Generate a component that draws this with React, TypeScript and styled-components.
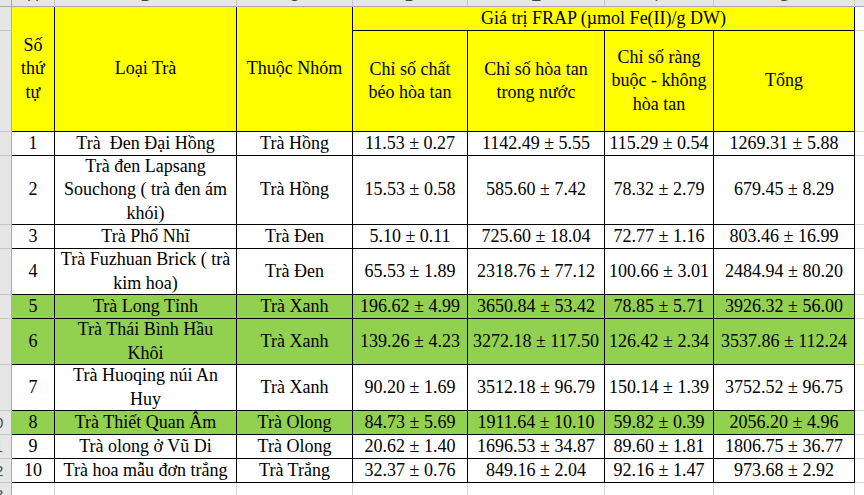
import React from "react";
import styled, { createGlobalStyle } from "styled-components";

const GlobalStyle = createGlobalStyle`
  html, body {
    margin: 0;
    padding: 0;
    background: #ffffff;
    overflow: hidden;
  }
  body {
    width: 864px;
    height: 495px;
  }
`;

const Sheet = styled.div`
  display: grid;
  grid-template-columns: 12px 43px 182px 116px 115px 137px 109px 141px 30px;
  grid-template-rows: 7px 24px 101px 24px 69px 24px 46px 24px 46px 46px 24px 24px 24px 24px;
  width: 864px;
  height: 495px;
  overflow: hidden;
  background: #ffffff;
`;

const Corner = styled.div`
  box-sizing: border-box;
  background: #e6e6e6;
  border-right: 1px solid #ababab;
  border-bottom: 1px solid #ababab;
`;

const ColHead = styled.div`
  box-sizing: border-box;
  background: #e6e6e6;
  border-right: 1px solid #c6c6c6;
  border-bottom: 1px solid #ababab;
  display: flex;
  justify-content: center;
  align-items: flex-end;
  overflow: hidden;
`;

const ColLetter = styled.span`
  font-family: "Liberation Sans", Arial, sans-serif;
  font-size: 15px;
  line-height: 14px;
  color: #444444;
  margin-bottom: 3px;
`;

const RowHead = styled.div`
  box-sizing: border-box;
  background: #e6e6e6;
  border-right: 1px solid #ababab;
  border-bottom: 1px solid #c6c6c6;
  display: flex;
  align-items: center;
  overflow: hidden;
`;

const RowNum = styled.span`
  flex: none;
  width: 18px;
  margin-left: -14px;
  text-align: center;
  font-family: "Liberation Sans", Arial, sans-serif;
  font-size: 15px;
  line-height: 18px;
  color: #444444;
`;

type Fill = "yellow" | "green" | "white";

const fillColor: Record<Fill, string> = {
  yellow: "#ffff00",
  green: "#92d050",
  white: "#ffffff",
};

const Cell = styled.div<{ $fill?: Fill; $rows?: number; $cols?: number; $nowrap?: boolean }>`
  box-sizing: border-box;
  grid-row: span ${(p) => p.$rows ?? 1};
  grid-column: span ${(p) => p.$cols ?? 1};
  background: ${(p) => fillColor[p.$fill ?? "white"]};
  border-right: 1px solid #000000;
  border-bottom: 1px solid #000000;
  display: flex;
  align-items: center;
  justify-content: center;
  text-align: center;
  padding: 0 3px;
  font-family: "Liberation Serif", "Times New Roman", serif;
  font-size: 18px;
  line-height: 23.5px;
  color: #000000;
  white-space: ${(p) => (p.$nowrap ? "pre" : "pre-wrap")};
  overflow: visible;
`;

const Blank = styled.div`
  box-sizing: border-box;
  background: #ffffff;
  border-right: 1px solid #d4d4d4;
  border-bottom: 1px solid #d4d4d4;
`;

type Row = {
  no: string;
  name: string;
  group: string;
  values: string[];
  green?: boolean;
};

const rows: Row[] = [
  {
    no: "1",
    name: "Trà  Đen Đại Hồng",
    group: "Trà Hồng",
    values: ["11.53 ± 0.27", "1142.49 ± 5.55", "115.29 ± 0.54", "1269.31 ± 5.88"],
  },
  {
    no: "2",
    name: "Trà đen Lapsang\nSouchong ( trà đen ám\nkhói)",
    group: "Trà Hồng",
    values: ["15.53 ± 0.58", "585.60 ± 7.42", "78.32 ± 2.79", "679.45 ± 8.29"],
  },
  {
    no: "3",
    name: "Trà Phổ Nhĩ",
    group: "Trà Đen",
    values: ["5.10 ± 0.11", "725.60 ± 18.04", "72.77 ± 1.16", "803.46 ± 16.99"],
  },
  {
    no: "4",
    name: "Trà Fuzhuan Brick ( trà\nkim hoa)",
    group: "Trà Đen",
    values: ["65.53 ± 1.89", "2318.76 ± 77.12", "100.66 ± 3.01", "2484.94 ± 80.20"],
  },
  {
    no: "5",
    name: "Trà Long Tỉnh",
    group: "Trà Xanh",
    values: ["196.62 ± 4.99", "3650.84 ± 53.42", "78.85 ± 5.71", "3926.32 ± 56.00"],
    green: true,
  },
  {
    no: "6",
    name: "Trà Thái Bình Hầu\nKhôi",
    group: "Trà Xanh",
    values: ["139.26 ± 4.23", "3272.18 ± 117.50", "126.42 ± 2.34", "3537.86 ± 112.24"],
    green: true,
  },
  {
    no: "7",
    name: "Trà Huoqing núi An\nHuy",
    group: "Trà Xanh",
    values: ["90.20 ± 1.69", "3512.18 ± 96.79", "150.14 ± 1.39", "3752.52 ± 96.75"],
  },
  {
    no: "8",
    name: "Trà Thiết Quan Âm",
    group: "Trà Olong",
    values: ["84.73 ± 5.69", "1911.64 ± 10.10", "59.82 ± 0.39", "2056.20 ± 4.96"],
    green: true,
  },
  {
    no: "9",
    name: "Trà olong ở Vũ Di",
    group: "Trà Olong",
    values: ["20.62 ± 1.40", "1696.53 ± 34.87", "89.60 ± 1.81", "1806.75 ± 36.77"],
  },
  {
    no: "10",
    name: "Trà hoa mẫu đơn trắng",
    group: "Trà Trắng",
    values: ["32.37 ± 0.76", "849.16 ± 2.04", "92.16 ± 1.47", "973.68 ± 2.92"],
  },
];

const letters = ["A", "B", "C", "D", "E", "F", "G", "H"];

export default function App() {
  return (
    <>
      <GlobalStyle />
      <Sheet>
        <Corner />
        {letters.map((l) => (
          <ColHead key={l}>
            <ColLetter>{l}</ColLetter>
          </ColHead>
        ))}

        <RowHead>
          <RowNum>1</RowNum>
        </RowHead>
        <Cell $fill="yellow" $rows={2}>{"Số\nthứ\ntự"}</Cell>
        <Cell $fill="yellow" $rows={2}>Loại Trà</Cell>
        <Cell $fill="yellow" $rows={2}>Thuộc Nhóm</Cell>
        <Cell $fill="yellow" $cols={4}>Giá trị FRAP (µmol Fe(II)/g DW)</Cell>
        <Blank />

        <RowHead>
          <RowNum>2</RowNum>
        </RowHead>
        <Cell $fill="yellow">{"Chỉ số chất\nbéo hòa tan"}</Cell>
        <Cell $fill="yellow">{"Chỉ số hòa tan\ntrong nước"}</Cell>
        <Cell $fill="yellow">{"Chỉ số ràng\nbuộc - không\nhòa tan"}</Cell>
        <Cell $fill="yellow">Tổng</Cell>
        <Blank />

        {rows.map((r, i) => {
          const fill: Fill = r.green ? "green" : "white";
          return (
            <React.Fragment key={r.no}>
              <RowHead>
                <RowNum>{i + 3}</RowNum>
              </RowHead>
              <Cell $fill={fill}>{r.no}</Cell>
              <Cell $fill={fill}>{r.name}</Cell>
              <Cell $fill={fill}>{r.group}</Cell>
              {r.values.map((v, j) => (
                <Cell key={j} $fill={fill} $nowrap>
                  {v}
                </Cell>
              ))}
              <Blank />
            </React.Fragment>
          );
        })}

        <RowHead>
          <RowNum>13</RowNum>
        </RowHead>
        {letters.map((l) => (
          <Blank key={l} />
        ))}
      </Sheet>
    </>
  );
}
